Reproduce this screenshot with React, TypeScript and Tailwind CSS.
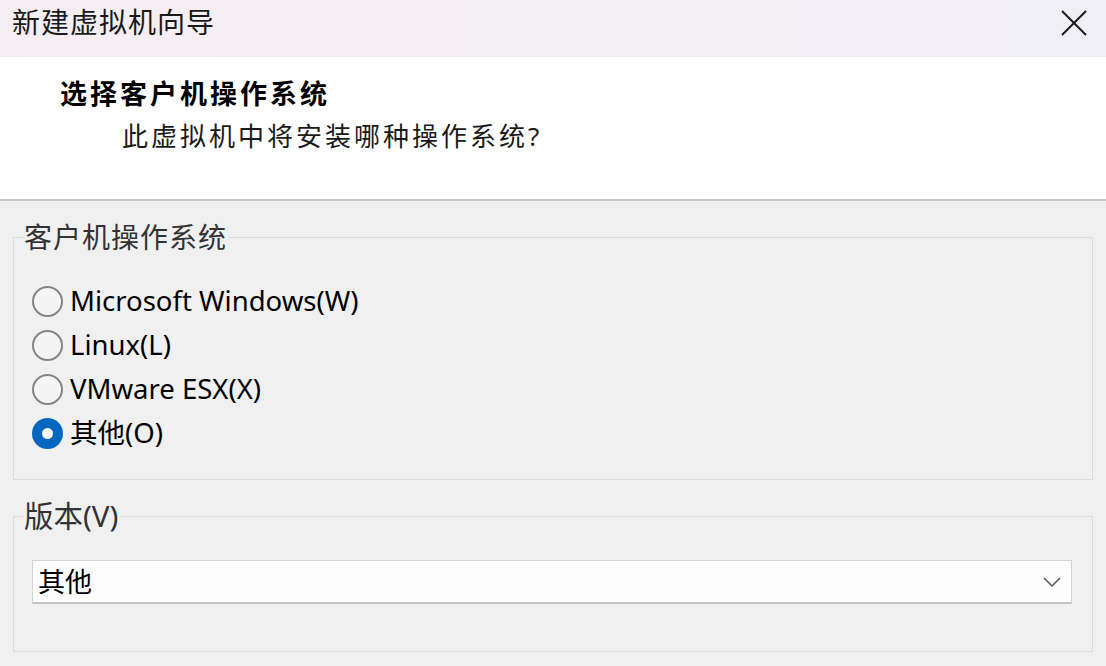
import { useState } from "react";

const cjk = "font-['Microsoft_YaHei','Noto_Sans','Noto_Sans_CJK_SC',sans-serif]";

const options = [
	{ id: "win", label: "Microsoft Windows(W)" },
	{ id: "linux", label: "Linux(L)" },
	{ id: "esx", label: "VMware ESX(X)" },
	{ id: "other", label: "其他(O)" },
];

function Radio({ checked }: { checked: boolean }) {
	if (checked) {
		return (
			<span className="flex h-[31px] w-[31px] shrink-0 items-center justify-center rounded-full bg-[#0067c0]">
				<span className="h-[11px] w-[11px] rounded-full bg-white" />
			</span>
		);
	}
	return <span className="h-[31px] w-[31px] shrink-0 rounded-full border-2 border-[#858585] bg-[#f4f4f4]" />;
}

export default function App() {
	const [os, setOs] = useState("other");

	return (
		<div className={`flex h-[666px] w-[1106px] flex-col overflow-hidden bg-[#f0f0f0] text-[#1a1a1a] ${cjk}`}>
			{/* title bar */}
			<div className="flex h-[57px] shrink-0 items-start justify-between bg-gradient-to-r from-[#f6eef3] to-[#f1eff6] pl-[12px] pr-[19px] pt-[2px]">
				<span className="text-[28px] leading-[40px] tracking-[1px]">新建虚拟机向导</span>
				<svg className="mt-[8px] h-[26px] w-[26px]" viewBox="0 0 26 26" fill="none" stroke="#1a1a1a" strokeWidth={2}>
					<path d="M1 1l24 24M25 1L1 25" />
				</svg>
			</div>

			{/* header */}
			<div className="h-[144px] shrink-0 border-b-2 border-[#c8c8c8] bg-white pl-[60px] pt-[19px]">
				<div className="text-[27px] font-bold leading-[36px] tracking-[3px] text-black">选择客户机操作系统</div>
				<div className="ml-[62px] mt-[6px] text-[26px] leading-[36px] tracking-[3px]">此虚拟机中将安装哪种操作系统?</div>
			</div>

			{/* body */}
			<div className="flex flex-col px-[13px] pt-[19px]">
				<fieldset className="border border-[#dcdcdc] px-[10px] pb-[24px]">
					<legend className="pr-[2px] text-[28px] leading-[34px] tracking-[1px] text-[#333]">客户机操作系统</legend>
					<div className="flex flex-col pl-[8px] pt-[25px]">
						{options.map((o) => (
							<label key={o.id} className="flex h-[44px] cursor-default items-center gap-[7px]" onClick={() => setOs(o.id)}>
								<Radio checked={os === o.id} />
								<span className="font-['Noto_Sans','Noto_Sans_CJK_SC',sans-serif] text-[27.5px] leading-[34px] text-black">
									{o.label}
								</span>
							</label>
						))}
					</div>
				</fieldset>

				<fieldset className="mt-[19px] border border-[#dcdcdc] px-[10px] pb-[47px]">
					<legend className="pr-[2px] font-['Noto_Sans','Noto_Sans_CJK_SC',sans-serif] text-[29.5px] leading-[34px] text-[#333]">
						版本(V)
					</legend>
					<div className="pl-[8px] pr-[10px] pt-[27px]">
						<div className="flex h-[44px] items-center justify-between border border-b-2 border-[#d4d4d4] border-b-[#c4c4c4] bg-[#fdfdfd] pl-[5px] pr-[10px]">
							<span className="text-[27px] leading-[40px] text-black">其他</span>
							<svg className="h-[10px] w-[18px]" viewBox="0 0 18 10" fill="none" stroke="#555" strokeWidth={1.5}>
								<path d="M1 1l8 8 8-8" />
							</svg>
						</div>
					</div>
				</fieldset>
			</div>
		</div>
	);
}
